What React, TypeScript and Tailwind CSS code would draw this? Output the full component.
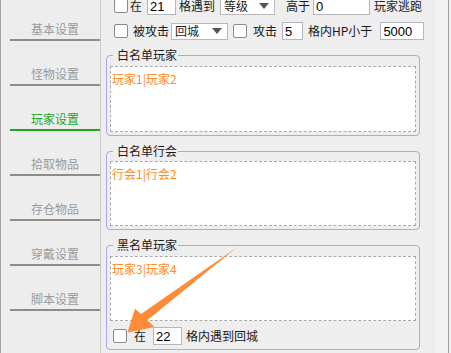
import React from "react";

const NAV_ITEMS = ["基本设置", "怪物设置", "玩家设置", "拾取物品", "存仓物品", "穿戴设置", "脚本设置"];
const ACTIVE = "玩家设置";

function CheckBox({ className = "" }: { className?: string }) {
  return <div className={`h-[14px] w-[14px] shrink-0 rounded-[2px] border border-[#8a8a8a] bg-white ${className}`} />;
}

function NumInput({ value, width, className = "" }: { value: string; width: string; className?: string }) {
  return (
    <input
      readOnly
      value={value}
      className={`h-[18px] ${width} shrink-0 border border-[#b3b7bf] bg-white px-[2px] font-['Liberation_Sans',sans-serif] text-[13px] leading-[16px] text-black outline-none ${className}`}
    />
  );
}

function Dropdown({ value, width, className = "" }: { value: string; width: string; className?: string }) {
  return (
    <div className={`flex h-[17px] ${width} shrink-0 items-center justify-between border border-[#b9b9b9] bg-white pl-[3px] pr-[5px] ${className}`}>
      <span>{value}</span>
      <svg width="10" height="6" viewBox="0 0 10 6">
        <path d="M0 0h10L5 6z" fill="#555" />
      </svg>
    </div>
  );
}

function Label({ children, className = "" }: { children: React.ReactNode; className?: string }) {
  return <span className={`shrink-0 whitespace-nowrap ${className}`}>{children}</span>;
}

function Group({
  title,
  text,
  boxClass,
  children,
  className = "",
}: {
  title: string;
  text: string;
  boxClass: string;
  children?: React.ReactNode;
  className?: string;
}) {
  return (
    <fieldset className={`ml-[5px] w-[314px] rounded-[4px] border border-[#a8a8f0] px-[3px] pb-[3px] ${className}`}>
      <legend className="ml-[3px] pl-[4px] pr-[1px] leading-[16px] text-[#1a1a1a]">{title}</legend>
      <div className={`border border-dashed border-[#a9a9a9] bg-white pl-[1px] text-[#ff8a1f] ${boxClass}`}>{text}</div>
      {children}
    </fieldset>
  );
}

export default function App() {
  return (
    <div className="relative flex h-[353px] w-[451px] overflow-hidden bg-[#eeeeee] font-['Noto_Sans_CJK_SC','Noto_Sans',sans-serif] text-[12px] leading-[16px] text-[#1a1a1a]">
      {/* sidebar */}
      <div className="flex w-[101px] shrink-0 flex-col gap-[25px] border-l border-r border-l-[#a3a3a3] border-r-[#cdcdcd] bg-[#ededed] pt-[21px]">
        {NAV_ITEMS.map((item) => {
          const active = item === ACTIVE;
          return (
            <div key={item} className="ml-[9px] flex flex-col">
              <span className={`text-center ${active ? "text-[#22a822]" : "text-[#9b9b9b]"}`}>{item}</span>
              <div className={`mt-[2px] h-[2px] ${active ? "bg-[#1fa81f]" : "bg-[#8c8c8c]"}`} />
            </div>
          );
        })}
      </div>

      {/* main */}
      <div className="flex w-[334px] shrink-0 flex-col">
        <div className="-mt-[3px] flex h-[18px] items-center">
          <CheckBox className="ml-[13px]" />
          <Label className="ml-[2px]">在</Label>
          <NumInput value="21" width="w-[29px]" className="ml-[5px]" />
          <Label className="ml-[3px]">格遇到</Label>
          <Dropdown value="等级" width="w-[55px]" className="ml-[5px]" />
          <Label className="ml-[11px]">高于</Label>
          <NumInput value="0" width="w-[57px]" className="ml-[3px]" />
          <Label className="ml-[4px]">玩家逃跑</Label>
        </div>
        <div className="mt-[7px] flex h-[18px] items-center">
          <CheckBox className="ml-[13px]" />
          <Label className="ml-[5px]">被攻击</Label>
          <Dropdown value="回城" width="w-[57px]" className="ml-[2px]" />
          <CheckBox className="ml-[5px]" />
          <Label className="ml-[6px]">攻击</Label>
          <NumInput value="5" width="w-[21px]" className="ml-[5px]" />
          <Label className="ml-[5px]">格内HP小于</Label>
          <NumInput value="5000" width="w-[44px]" className="ml-[8px]" />
        </div>

        <Group title="白名单玩家" text="玩家1|玩家2" boxClass="h-[66px] pt-[4px]" className="mt-[7px] pt-[3px]" />
        <Group title="白名单行会" text="行会1|行会2" boxClass="h-[65px] pt-[4px]" className="mt-[7px] pt-[2px]" />
        <Group title="黑名单玩家" text="玩家3|玩家4" boxClass="h-[65px] pt-[4px]" className="mt-[7px] pt-[3px] pb-[4px]">
          <div className="mt-[6px] flex h-[18px] items-center">
            <CheckBox className="ml-[3px]" />
            <Label className="ml-[7px]">在</Label>
            <NumInput value="22" width="w-[29px]" className="ml-[7px]" />
            <Label className="ml-[4px]">格内遇到回城</Label>
          </div>
        </Group>
      </div>

      {/* right edge strip */}
      <div className="w-[13px] shrink-0 bg-[#f2f2f2]" />
      <div className="w-px shrink-0 bg-[#a0a0a0]" />
      <div className="w-px shrink-0 bg-[#ededed]" />

      {/* annotation arrow */}
      <svg className="pointer-events-none absolute left-0 top-0" width="451" height="353" viewBox="0 0 451 353">
        <polygon points="240.4,244.5 239.6,245.5 140.3,314.4 145.7,321.6" fill="#fd8b3a" />
        <polygon points="127.5,332.5 135,308.5 154.5,327" fill="#fd8b3a" />
      </svg>
    </div>
  );
}
